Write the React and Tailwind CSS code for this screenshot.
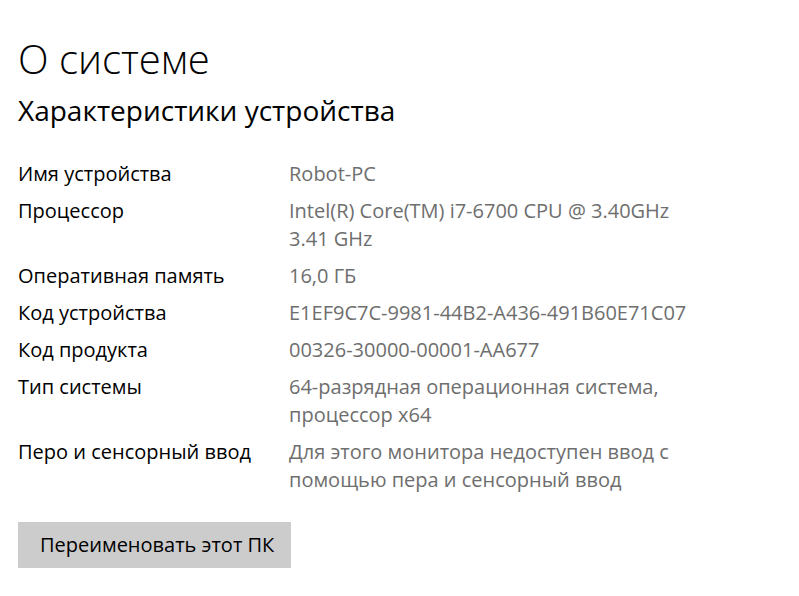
const specs = [
  { label: 'Имя устройства', value: ['Robot-PC'] },
  { label: 'Процессор', value: ['Intel(R) Core(TM) i7-6700 CPU @ 3.40GHz', '3.41 GHz'] },
  { label: 'Оперативная память', value: ['16,0 ГБ'] },
  { label: 'Код устройства', value: ['E1EF9C7C-9981-44B2-A436-491B60E71C07'] },
  { label: 'Код продукта', value: ['00326-30000-00001-AA677'] },
  { label: 'Тип системы', value: ['64-разрядная операционная система,', 'процессор x64'] },
  { label: 'Перо и сенсорный ввод', value: ['Для этого монитора недоступен ввод с', 'помощью пера и сенсорный ввод'] },
];

export default function App() {
  return (
    <div className="w-[799px] h-[596px] bg-white text-black pl-[18px] pt-[33px] overflow-hidden" style={{ fontFamily: '"Open Sans", "Noto Sans", sans-serif' }}>
      <h1 className="text-[40px] leading-[52px] font-light">О системе</h1>
      <h2 className="text-[28px] leading-[38px] mt-[6px]">Характеристики устройства</h2>

      <div className="mt-[31px] flex flex-col gap-[9px] text-[20px] leading-[28px]">
        {specs.map((s) => (
          <div key={s.label} className="flex">
            <div className="w-[271px] shrink-0">{s.label}</div>
            <div className="text-[#6e6e6e]">
              {s.value.map((v) => <div key={v}>{v}</div>)}
            </div>
          </div>
        ))}
      </div>

      <button className="mt-[28px] w-[273px] h-[46px] bg-[#cccccc] text-[20px] text-left pl-[22px]">
        Переименовать этот ПК
      </button>
    </div>
  );
}
